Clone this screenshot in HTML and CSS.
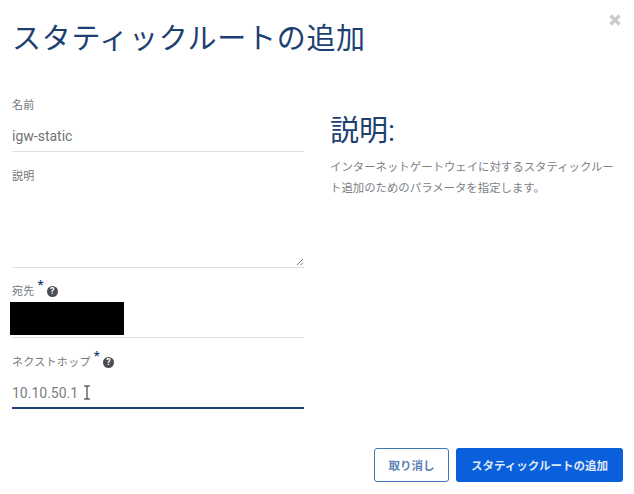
FILE: index.html
```html
<!DOCTYPE html>
<html lang="ja">

<head>
    <meta charset="UTF-8"/>
    <title>スタティックルートの追加</title>
    <link rel="stylesheet" href="styles.css">
</head>

<body>
<div class="modal">
    <button class="close" aria-label="close">
        <svg viewBox="0 0 14 14" width="14" height="14"><path d="M2.5 2.5l9 9M11.5 2.5l-9 9"/></svg>
    </button>
    <h1>スタティックルートの追加</h1>

    <div class="content">
        <form class="fields">
            <div class="field name">
                <label>名前</label>
                <div class="value">igw-static</div>
            </div>
            <div class="field desc">
                <label>説明</label>
                <div class="area">
                    <svg class="grip" viewBox="0 0 8 8" width="8" height="8"><path d="M1 7l6-6M4.5 7l2.5-2.5"/></svg>
                </div>
            </div>
            <div class="field dest">
                <label>宛先<span class="req">*</span><span class="help">?</span></label>
                <div class="value masked"><span class="mask"></span></div>
            </div>
            <div class="field hop">
                <label>ネクストホップ<span class="req">*</span><span class="help">?</span></label>
                <div class="value active">10.10.50.1<svg class="cursor" viewBox="0 0 8 15" width="8" height="15"><path d="M1 1h6M4 1v13M1 14h6"/></svg></div>
            </div>
        </form>

        <div class="about">
            <h2>説明:</h2>
            <p>インターネットゲートウェイに対するスタティックルート追加のためのパラメータを指定します。</p>
        </div>
    </div>

    <div class="actions">
        <button class="btn cancel">取り消し</button>
        <button class="btn primary">スタティックルートの追加</button>
    </div>
</div>
</body>

</html>
```

FILE: styles.css
```css
* {
    margin: 0;
    padding: 0;
    box-sizing: border-box;
}

body {
    width: 634px;
    height: 494px;
    overflow: hidden;
    background: #fff;
    font-family: Roboto, "Noto Sans CJK JP", sans-serif;
}

.modal {
    position: relative;
    height: 494px;
    padding: 20px 11px 0 12px;
}

.close {
    position: absolute;
    top: 13px;
    right: 12px;
    width: 14px;
    height: 14px;
    border: 0;
    background: none;
}

.close svg {
    display: block;
}

.close path {
    fill: none;
    stroke: #c9cbcf;
    stroke-width: 3.4;
}

h1 {
    font-size: 29px;
    font-weight: 400;
    line-height: 38px;
    color: #1d3f72;
    letter-spacing: 0.7px;
}

.content {
    display: flex;
    margin-top: 40px;
    height: 350px;
}

.fields {
    width: 292px;
    flex: none;
}

.field label {
    display: block;
    font-size: 11px;
    line-height: 16px;
    letter-spacing: 0.3px;
    color: #73777c;
}

.value {
    font-size: 14px;
    color: #6e7277;
    border-bottom: 1px solid #dcdfe3;
}

.name .value {
    height: 38px;
    padding-top: 12px;
    line-height: 20px;
}

.desc {
    margin-top: 17px;
}

.area {
    position: relative;
    height: 83px;
    border-bottom: 1px solid #dcdfe3;
}

.grip {
    position: absolute;
    right: 0;
    bottom: 1px;
}

.grip path {
    fill: none;
    stroke: #777;
    stroke-width: 1;
}

.dest {
    margin-top: 16px;
}

.req {
    position: relative;
    top: -6px;
    margin-left: 3px;
    font-size: 13px;
    line-height: 1;
    font-weight: 700;
    color: #1d3f72;
}

.help {
    display: inline-block;
    width: 11px;
    height: 11px;
    margin-left: 3px;
    border-radius: 50%;
    background: #4a4d52;
    color: #fff;
    font-size: 9px;
    font-weight: 700;
    line-height: 11px;
    letter-spacing: 0;
    text-align: center;
    vertical-align: 1px;
}

.masked {
    height: 36px;
    margin-top: 2px;
}

.mask {
    display: block;
    width: 114px;
    height: 33px;
    margin-left: -2px;
    background: #000;
}

.hop {
    margin-top: 17px;
}

.active {
    position: relative;
    height: 38px;
    padding-top: 12px;
    line-height: 20px;
    color: #7a7e83;
    border-bottom: 2px solid #1d3f72;
}

.cursor {
    position: absolute;
    left: 71px;
    top: 14px;
}

.cursor path {
    fill: none;
    stroke: #222;
    stroke-width: 1;
}

.about {
    margin-left: 26px;
    width: 286px;
    padding-top: 13px;
}

h2 {
    font-size: 29px;
    font-weight: 400;
    line-height: 40px;
    color: #1d3f72;
}

.about p {
    margin-top: 6px;
    font-size: 11.4px;
    line-height: 21px;
    color: #7d8186;
}

.actions {
    display: flex;
    justify-content: flex-end;
    gap: 7px;
}

.btn {
    height: 34px;
    border-radius: 3px;
    font-family: inherit;
    font-size: 11.5px;
    font-weight: 700;
}

.cancel {
    width: 75px;
    background: #fff;
    border: 1px solid #3f78b8;
    color: #5a82b4;
}

.primary {
    width: 167px;
    background: #0a5fdc;
    border: 0;
    color: #dfe8f6;
}
```
